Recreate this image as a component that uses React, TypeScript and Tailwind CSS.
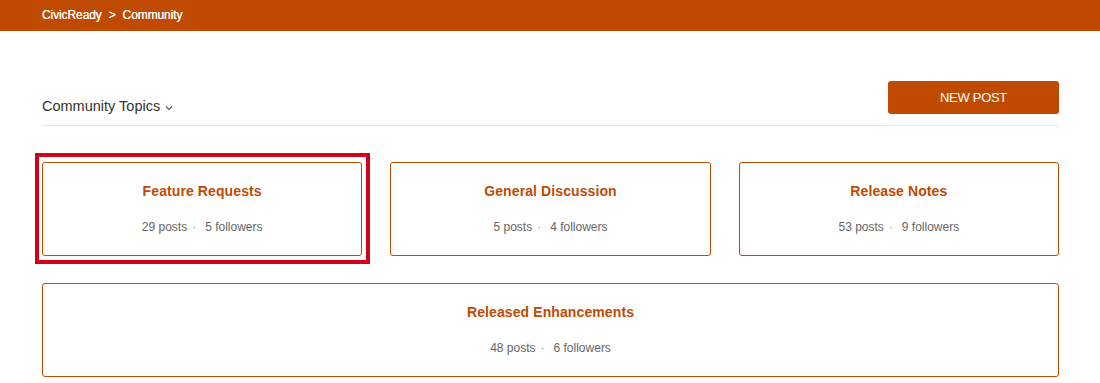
import React from "react";

const topics = [
  { name: "Feature Requests", posts: 29, followers: 5, highlight: true },
  { name: "General Discussion", posts: 5, followers: 4 },
  { name: "Release Notes", posts: 53, followers: 9 },
];

function Card({ name, posts, followers, highlight }: { name: string; posts: number; followers: number; highlight?: boolean }) {
  return (
    <div className="relative flex h-[94px] flex-col items-center rounded-[3px] border border-[#c04b00] bg-white">
      {highlight && (
        <div className="pointer-events-none absolute left-[-8px] right-[-9px] top-[-10px] bottom-[-9px] border-4 border-[#d0021b]" />
      )}
      <div className="mt-[19px] text-[14px] font-bold leading-[18px] tracking-[0.1px] text-[#c04b00]">{name}</div>
      <div className="mt-[20px] flex items-center text-[12px] leading-[14px] text-[#666666]">
        <span>{posts} posts</span>
        <span className="ml-[5px] mr-[9px] text-[#999]">·</span>
        <span>{followers} followers</span>
      </div>
    </div>
  );
}

export default function App() {
  return (
    <div className="min-h-[383px] bg-white" style={{ fontFamily: '"Liberation Sans", Arial, sans-serif' }}>
      <div className="flex h-[31px] items-start bg-[#c04b00] px-[42px] pt-[7px] text-[12px] leading-[16px] tracking-[-0.1px] text-white [text-shadow:0_0_0.4px_#fff]">
        <span>CivicReady</span>
        <span className="mx-[7px]">&gt;</span>
        <span>Community</span>
      </div>
      <div className="px-[42px] pr-[41px]">
        <div className="mt-[50px] flex items-end justify-between border-b border-[#e8e8e8] pb-[10px]">
          <div className="flex items-center text-[14.5px] leading-[18px] text-[#333333]">
            Community Topics
            <svg className="ml-[5px] mt-[3px]" width="8" height="6" viewBox="0 0 8 6" fill="none">
              <path d="M1 1.5 L4 4.5 L7 1.5" stroke="#555" strokeWidth="1.1" />
            </svg>
          </div>
          <button className="mb-[1px] h-[33px] w-[171px] rounded-[3px] bg-[#c04b00] text-[13px] tracking-[-0.3px] text-white">
            NEW POST
          </button>
        </div>
        <div className="mt-[36px] grid grid-cols-3 gap-x-[28px]">
          {topics.map((t) => (
            <Card key={t.name} {...t} />
          ))}
        </div>
        <div className="mt-[27px]">
          <Card name="Released Enhancements" posts={48} followers={6} />
        </div>
      </div>
    </div>
  );
}
